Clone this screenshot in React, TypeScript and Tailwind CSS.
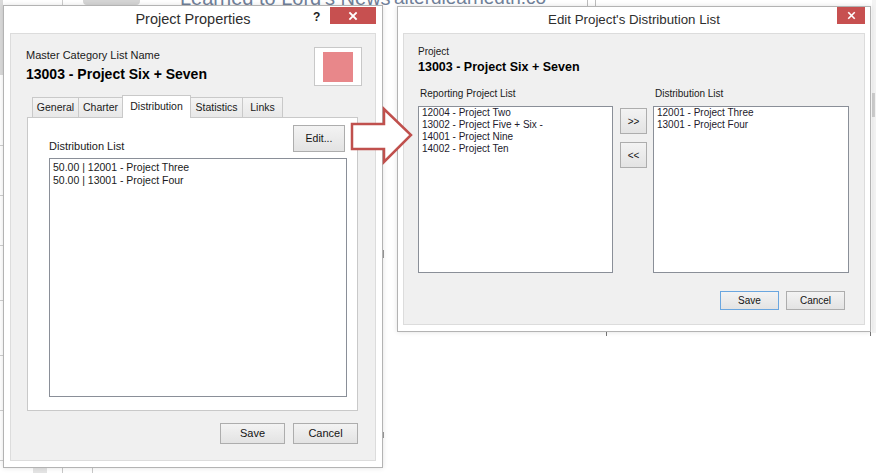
import type { ReactNode } from "react";

const LEFT_TABS = [
  { label: "General", w: "w-[47px]" },
  { label: "Charter", w: "w-[45px]" },
  { label: "Distribution", w: "w-[69px]", active: true },
  { label: "Statistics", w: "w-[53px]" },
  { label: "Links", w: "w-[41px]" },
];

const REPORTING = [
  "12004 - Project Two",
  "13002 - Project Five + Six -",
  "14001 - Project Nine",
  "14002 - Project Ten",
];

const DISTRIBUTION = ["12001 - Project Three", "13001 - Project Four"];

function WinButton({
  children,
  className = "",
  focused = false,
}: {
  children: ReactNode;
  className?: string;
  focused?: boolean;
}) {
  return (
    <button
      className={`flex shrink-0 items-center justify-center border bg-linear-to-b from-[#f3f3f3] to-[#e3e3e3] text-[#141414] ${
        focused ? "border-[#6aa6df]" : "border-[#adadad]"
      } ${className}`}
    >
      {children}
    </button>
  );
}

function CloseX({ size }: { size: number }) {
  return (
    <svg width={size} height={size} viewBox="0 0 10 10" stroke="white" strokeWidth="1.8" strokeLinecap="square">
      <path d="M2 2L8 8M8 2L2 8" />
    </svg>
  );
}

export default function App() {
  return (
    <div className="relative w-[876px] h-[473px] overflow-hidden bg-white font-['Liberation_Sans',Arial,sans-serif]">
      {/* background bits peeking out behind the dialogs */}
      <div className="absolute left-0 top-0 w-[3px] h-[75px] bg-[#dadada]" />
      {[145, 195, 245, 300, 355, 410, 460].map((y) => (
        <div key={y} className="absolute left-0 w-[3px] h-px bg-[#cfcfcf]" style={{ top: y }} />
      ))}
      <div className="absolute left-[83px] top-0 w-[57px] h-[5px] rounded-b bg-[#d5d5d5]" />
      <div className="absolute left-[62px] top-0 w-px h-[5px] bg-[#cccccc]" />
      <div className="absolute left-[180px] top-[-12px] text-[20px] leading-[20px] text-[#71819a] whitespace-nowrap">
        Learned to Lord's News
      </div>
      <div className="absolute left-[394px] top-[-12px] text-[19px] leading-[20px] text-[#71819a] whitespace-nowrap">
        alterdlearnedtn.co
      </div>
      <div className="absolute left-[587px] top-0 w-px h-[6px] bg-[#bdbdbd]" />
      <div className="absolute left-[595px] top-0 w-px h-[6px] bg-[#bdbdbd]" />
      <div className="absolute left-[33px] top-[468px] w-[14px] h-[5px] bg-[#e4e4e4]" />
      <div className="absolute left-[62px] top-[468px] w-px h-[5px] bg-[#c8c8c8]" />
      <div className="absolute left-[92px] top-[468px] w-px h-[5px] bg-[#c8c8c8]" />
      <div className="absolute left-[872px] top-0 w-[4px] h-[333px] bg-[#f3f3f3]" />
      <div className="absolute left-[872px] top-[93px] w-[3px] h-[24px] bg-[#cdcdcd]" />
      <div className="absolute left-[606px] top-[332px] w-px h-[4px] bg-[#777]" />
      <div className="absolute left-[870px] top-[332px] w-px h-[4px] bg-[#777]" />
      <div className="absolute left-[383px] top-[250px] w-px h-[8px] bg-[#9a9a9a]" />
      <div className="absolute left-[383px] top-[432px] w-px h-[6px] bg-[#9a9a9a]" />

      {/* Project Properties */}
      <div className="absolute left-[3px] top-[5px] w-[380px] h-[463px] flex flex-col border border-[#b3b3b3] bg-white shadow-[0_0_5px_rgba(0,0,0,0.12)]">
        <div className="relative h-[27px] flex items-center justify-center">
          <span className="text-[14.5px] text-[#2e2e2e]">Project Properties</span>
          <span className="absolute left-[309px] top-[2px] text-[12px] font-bold text-[#222]">?</span>
          <div className="absolute right-[6px] top-[1px] w-[46px] h-[17px] bg-[#c75050] flex items-center justify-center">
            <CloseX size={10} />
          </div>
        </div>

        <div className="flex-1 mx-[6px] mb-[6px] flex flex-col border border-[#dcdcdc] bg-[#f0f0f0] pt-[13px] pl-[16px] pr-[17px]">
          <div className="flex justify-between">
            <div className="pt-[2px] -ml-px">
              <div className="text-[11px] leading-[13px] text-[#1a1a1a]">Master Category List Name</div>
              <div className="mt-[4px] text-[14px] leading-[17px] font-bold text-black">13003 - Project Six + Seven</div>
            </div>
            <div className="-mr-[4px] w-[48px] h-[39px] border border-[#c8c8c8] bg-white flex items-center justify-center">
              <div className="w-[30px] h-[30px] bg-[#e8878a]" />
            </div>
          </div>

          <div className="mt-[9px] h-[22px] flex items-end pl-[5px]">
            {LEFT_TABS.map((t, i) => (
              <div
                key={t.label}
                className={`${t.w} ${i > 0 ? "-ml-px" : ""} flex justify-center border border-b-0 border-[#c9c9c9] text-[10.5px] text-[#1a1a1a] ${
                  t.active
                    ? "relative z-10 h-[23px] -mb-px bg-white pt-[3px]"
                    : "h-[20px] bg-linear-to-b from-[#f4f4f4] to-[#e8e8e8] items-center"
                }`}
              >
                {t.label}
              </div>
            ))}
          </div>

          <div className="h-[294px] border border-[#c9c9c9] bg-white pt-[7px] pl-[21px] pr-[12px]">
            <div className="flex items-end justify-between">
              <span className="-mb-px text-[11px] leading-[13px] text-[#1a1a1a]">Distribution List</span>
              <WinButton className="w-[52px] h-[27px] text-[10.5px]">Edit...</WinButton>
            </div>
            <div className="mt-[6px] w-[298px] h-[239px] border border-[#8a8f98] bg-white pt-[2px] pl-[3px] text-[10.5px] leading-[13px] text-[#1a1a1a]">
              <div>50.00 | 12001 - Project Three</div>
              <div>50.00 | 13001 - Project Four</div>
            </div>
          </div>

          <div className="mt-[12px] flex justify-end gap-[8px]">
            <WinButton className="w-[65px] h-[21px] text-[11px]">Save</WinButton>
            <WinButton className="w-[65px] h-[21px] text-[11px]">Cancel</WinButton>
          </div>
        </div>
      </div>

      {/* Edit Project's Distribution List */}
      <div className="absolute left-[397px] top-[6px] w-[474px] h-[326px] flex flex-col border border-[#b3b3b3] bg-white shadow-[0_0_5px_rgba(0,0,0,0.12)]">
        <div className="relative h-[26px] flex items-center justify-center">
          <span className="text-[13.3px] text-[#2e2e2e]">Edit Project's Distribution List</span>
          <div className="absolute right-[5px] top-0 w-[28px] h-[17px] bg-[#c75050] flex items-center justify-center">
            <CloseX size={9} />
          </div>
        </div>

        <div className="flex-1 mx-[5px] mb-[6px] flex flex-col border border-[#dcdcdc] bg-[#f0f0f0] pt-[12px] pl-[14px] pr-[14px]">
          <div className="text-[10px] leading-[12px] text-[#1a1a1a]">Project</div>
          <div className="mt-[2px] text-[12.5px] leading-[15px] font-bold text-black">13003 - Project Six + Seven</div>

          <div className="mt-[13px] flex">
            <div className="w-[195px] shrink-0">
              <div className="pl-[2px] text-[10px] leading-[12px] text-[#1a1a1a]">Reporting Project List</div>
              <div className="mt-[6px] h-[167px] border border-[#8a8f98] bg-white pl-[3px] text-[10px] leading-[12px] text-[#231a2c]">
                {REPORTING.map((r) => (
                  <div key={r}>{r}</div>
                ))}
              </div>
            </div>
            <div className="ml-[7px] pt-[20px] flex flex-col gap-[8px]">
              <WinButton className="w-[27px] h-[26px] text-[10px]">&gt;&gt;</WinButton>
              <WinButton className="w-[27px] h-[26px] text-[10px]">&lt;&lt;</WinButton>
            </div>
            <div className="ml-[6px] w-[196px] shrink-0">
              <div className="pl-[2px] text-[10px] leading-[12px] text-[#1a1a1a]">Distribution List</div>
              <div className="mt-[6px] h-[167px] border border-[#8a8f98] bg-white pl-[3px] text-[10px] leading-[12px] text-[#231a2c]">
                {DISTRIBUTION.map((r) => (
                  <div key={r}>{r}</div>
                ))}
              </div>
            </div>
          </div>

          <div className="mt-[18px] mr-[5px] flex justify-end gap-[7px]">
            <WinButton focused className="w-[59px] h-[19px] text-[10px]">Save</WinButton>
            <WinButton className="w-[59px] h-[19px] text-[10px]">Cancel</WinButton>
          </div>
        </div>
      </div>

      {/* callout arrow */}
      <svg className="absolute left-[350px] top-[105px]" width="64" height="60" viewBox="0 0 64 60">
        <polygon
          points="2,19 34,19 34,4 61,30 34,57 34,44 2,44"
          fill="white"
          stroke="#c0504d"
          strokeWidth="2.5"
          strokeLinejoin="miter"
        />
      </svg>
    </div>
  );
}
